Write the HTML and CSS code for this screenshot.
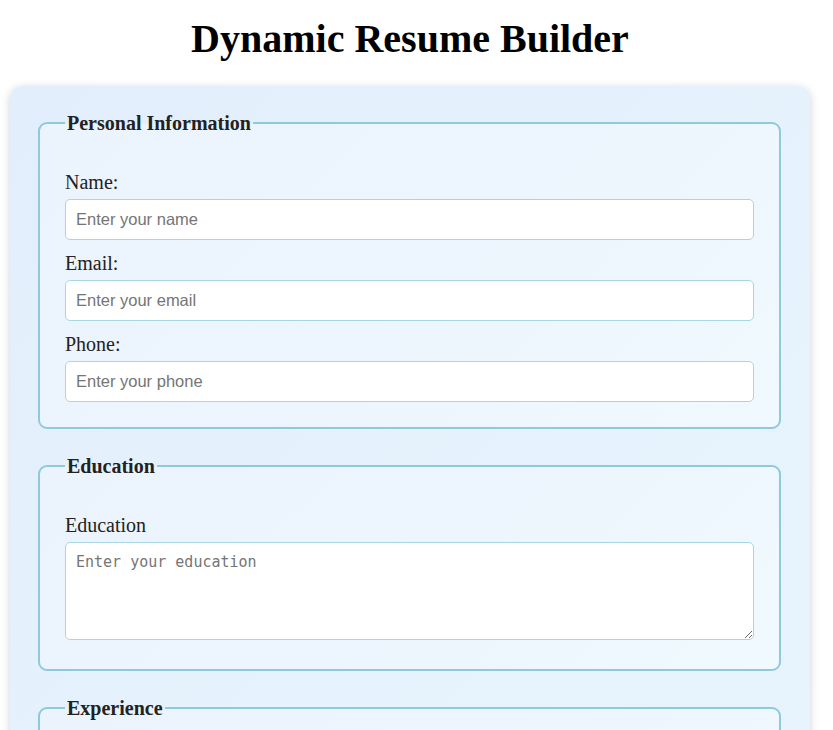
FILE: index.html
```html
<!DOCTYPE html>
<html lang="en">
<head>
<meta charset="utf-8">
<title>Dynamic Resume Builder</title>
<link rel="stylesheet" href="styles.css">
</head>
<body>
<h1 class="title">Dynamic Resume Builder</h1>
<form class="builder">
  <fieldset class="section">
    <legend class="section-title">Personal Information</legend>
    <label class="field-label" for="name">Name:</label>
    <input class="field-input" id="name" type="text" placeholder="Enter your name">
    <label class="field-label" for="email">Email:</label>
    <input class="field-input" id="email" type="email" placeholder="Enter your email">
    <label class="field-label" for="phone">Phone:</label>
    <input class="field-input" id="phone" type="tel" placeholder="Enter your phone">
  </fieldset>
  <fieldset class="section">
    <legend class="section-title">Education</legend>
    <label class="field-label" for="education">Education</label>
    <textarea class="field-area" id="education" placeholder="Enter your education"></textarea>
  </fieldset>
  <fieldset class="section">
    <legend class="section-title">Experience</legend>
    <label class="field-label" for="experience">Experience</label>
    <textarea class="field-area" id="experience" placeholder="Enter your experience"></textarea>
  </fieldset>
</form>
</body>
</html>
```
FILE: styles.css
```css
html, body {
  margin: 0;
  padding: 0;
  background: #ffffff;
  font-family: "Liberation Serif", "Times New Roman", serif;
  color: #222;
}

.title {
  margin: 17px 0 25px 10px;
  width: 800px;
  text-align: center;
  font-size: 40px;
  font-weight: bold;
  line-height: 44px;
  color: #000;
}

.builder {
  box-sizing: border-box;
  width: 800px;
  margin: 0 0 20px 10px;
  padding: 26px 29px 28px 28px;
  border-radius: 12px;
  background: linear-gradient(135deg, #e2eefb 0%, #e6f2fc 60%, #e9f5fd 100%);
  box-shadow: 0 2px 10px rgba(0, 0, 0, 0.18);
}

.section {
  margin: 0 0 26px 0;
  padding: 25px;
  border: 2px solid #8ecadb;
  border-radius: 9px;
  background: linear-gradient(135deg, #ebf4fd 0%, #edf6fd 60%, #eff9fe 100%);
  min-width: 0;
}

.section-title {
  padding: 0 2px;
  font-size: 20px;
  line-height: 22px;
  font-weight: bold;
  color: #222;
}

.field-label {
  display: block;
  margin: 12px 0 6px;
  font-size: 20px;
  line-height: 22px;
  color: #222;
}

.field-input {
  display: block;
  box-sizing: border-box;
  width: 100%;
  height: 41px;
  margin: 0;
  padding: 10px;
  border: 1px solid #a9d6e3;
  border-radius: 5px;
  background: #fff;
  font-family: "Liberation Sans", Arial, sans-serif;
  font-size: 16.5px;
  color: #222;
}

.field-input::placeholder {
  color: #757575;
}

.field-area {
  display: block;
  box-sizing: border-box;
  width: 100%;
  height: 98px;
  margin: 0 0 4px;
  padding: 10px;
  border: 1px solid #a9d6e3;
  border-radius: 5px;
  background: #fff;
  font-family: "DejaVu Sans Mono", "Liberation Mono", monospace;
  font-size: 15px;
  color: #222;
}

.field-area::placeholder {
  color: #757575;
}
```
